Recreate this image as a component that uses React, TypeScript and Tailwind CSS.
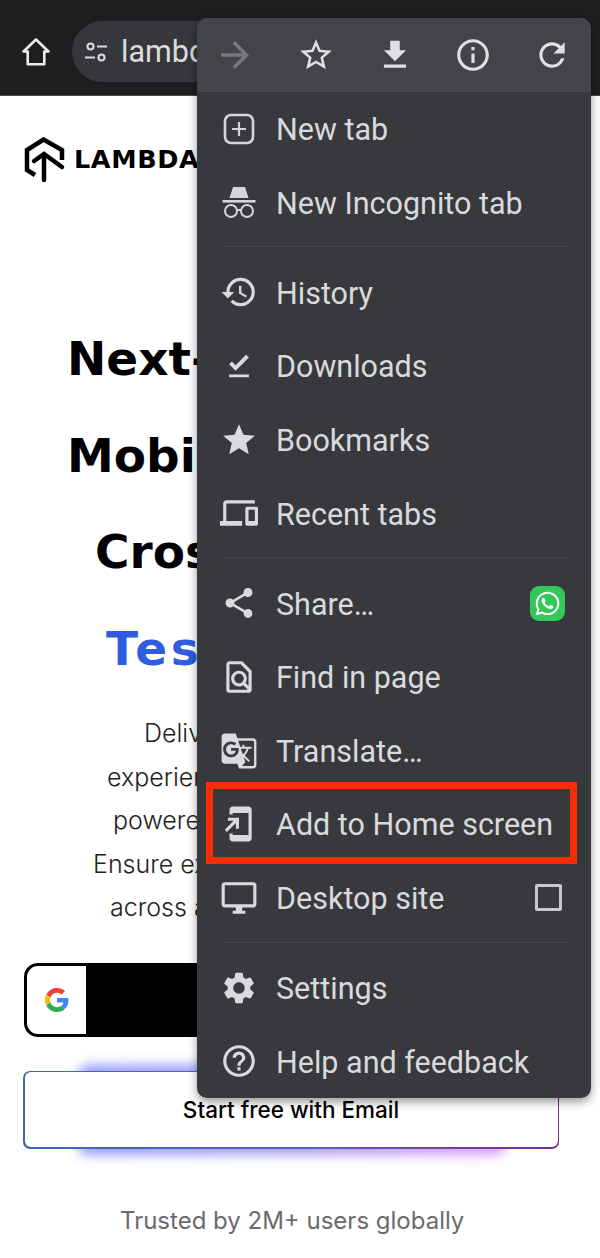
import type { ReactNode } from "react";
import {
  MdAddToHomeScreen,
  MdArrowForward,
  MdDevices,
  MdFileDownload,
  MdFileDownloadDone,
  MdGTranslate,
  MdHelpOutline,
  MdHistory,
  MdInfoOutline,
  MdOutlineDesktopWindows,
  MdOutlineFindInPage,
  MdRefresh,
  MdSettings,
  MdShare,
  MdStar,
  MdStarBorder,
} from "react-icons/md";
import { FaWhatsapp } from "react-icons/fa";

function HomeIcon() {
  return (
    <svg viewBox="0 0 30 30" className="h-[30px] w-[30px]" fill="none" stroke="#ececec" strokeWidth="2.6" strokeLinejoin="round">
      <path d="M15 2.5 2.5 14.5h4.2v12.8h16.6V14.5h4.2z" />
    </svg>
  );
}

function TuneIcon() {
  return (
    <svg viewBox="0 0 24 24" className="h-6 w-6" fill="none" stroke="#dcdcdc" strokeWidth="2">
      <circle cx="6.5" cy="6.5" r="3" />
      <path d="M13 6.5h10M1 17.5h10" />
      <circle cx="17.5" cy="17.5" r="3" />
    </svg>
  );
}

function NewTabIcon() {
  return (
    <svg viewBox="0 0 32 32" className="h-[32px] w-[32px]" fill="none" stroke="#d4d5d8" strokeWidth="2.6">
      <rect x="2" y="2" width="28" height="28" rx="6" />
      <path d="M16 9v14M9 16h14" strokeWidth="2.2" />
    </svg>
  );
}

function IncognitoIcon() {
  return (
    <svg viewBox="0 0 34 34" className="h-[34px] w-[34px]" fill="#d4d5d8">
      <path d="M11 2h12l3.500 11H7.500z" />
      <rect x="0.5" y="15" width="33" height="2.6" />
      <g fill="none" stroke="#d4d5d8" strokeWidth="2">
        <circle cx="9" cy="26" r="6" />
        <circle cx="25" cy="26" r="6" />
        <path d="M15 25h4" />
      </g>
    </svg>
  );
}

function LambdaLogo() {
  return (
    <svg viewBox="0 0 42 46" className="h-[46px] w-[42px]" fill="none" stroke="#000" strokeWidth="4.5" strokeLinejoin="miter">
      <path d="M11 38 3 33V13L19.500 2.500 38 13v10" />
      <path d="M10 24l10-7 18 13" strokeLinecap="round" />
      <path d="M20 18v25" strokeLinecap="round" />
    </svg>
  );
}

function GoogleIcon() {
  return (
    <svg viewBox="0 0 48 48" className="h-[24px] w-[24px]">
      <path fill="#EA4335" d="M24 9.5c3.5 0 6.7 1.2 9.1 3.6l6.8-6.8C35.800 2.500 30.300 0 24 0 14.600 0 6.500 5.400 2.600 13.200l7.900 6.200C12.400 13.600 17.700 9.500 24 9.500z" />
      <path fill="#4285F4" d="M46.900 24.500c0-1.600-.1-3.100-.4-4.500H24v9h12.900c-.6 3-2.300 5.500-4.800 7.200l7.700 6c4.500-4.200 7.100-10.300 7.100-17.700z" />
      <path fill="#FBBC05" d="M10.500 28.600c-.5-1.400-.8-3-.8-4.600s.3-3.200.8-4.600l-7.900-6.200C.9 16.500 0 20.100 0 24s.9 7.500 2.600 10.800z" />
      <path fill="#34A853" d="M24 48c6.500 0 11.900-2.100 15.900-5.800l-7.700-6c-2.200 1.500-4.900 2.300-8.200 2.300-6.300 0-11.600-4.100-13.500-9.900l-7.900 6.200C6.500 42.600 14.600 48 24 48z" />
    </svg>
  );
}

function MenuRow({ icon, label, right, children }: { icon: ReactNode; label: string; right?: ReactNode; children?: ReactNode }) {
  return (
    <div className="relative flex h-[73.6px] items-center pl-[22px] pr-[26px] text-[#d9dadd]">
      <span className="flex w-[40px] shrink-0 items-center justify-center">{icon}</span>
      <span className="ml-[17px] flex-1 pt-[3px] text-[30.5px] leading-none">{label}</span>
      {right}
      {children}
    </div>
  );
}

function Divider() {
  return (
    <div className="flex h-[16.500px] items-start pt-[7px]">
      <div className="mx-[24px] h-px w-full bg-[#46474b]" />
    </div>
  );
}

// only what shows to the left of the open menu
const headingLines = [
  { text: "Next-", cls: "pl-[67px] text-black" },
  { text: "Mobi", cls: "pl-[67px] text-black" },
  { text: "Cros", cls: "pl-[95px] text-black" },
  { text: "Tes", cls: "pl-[106px] tracking-[3.5px] text-[#2f5ce0]" },
];

const paragraphLines = [
  { text: "Deliv", cls: "pl-[144px]" },
  { text: "experien", cls: "pl-[107px]" },
  { text: "powere", cls: "pl-[113px]" },
  { text: "Ensure ex", cls: "pl-[93px]" },
  { text: "across a", cls: "pl-[110px]" },
];

export default function App() {
  return (
    <div className="relative h-[1258px] w-[600px] overflow-hidden bg-white" style={{ fontFamily: "Roboto, sans-serif" }}>
      <header className="flex h-[96px] items-start border-b border-[#4a4b4f] bg-[#1e1e20] pl-[21px] pt-[21px]">
        <div className="mt-[16px]">
          <HomeIcon />
        </div>
        <div className="ml-[21px] flex h-[61px] w-[400px] items-center rounded-l-[31px] bg-[#36373b] pl-[12px]">
          <TuneIcon />
          <span className="ml-[13px] text-[30.5px] text-[#dcdcdc]">lambd</span>
        </div>
      </header>

      <div className="mt-[41px] flex h-[46px] items-center pl-[24px]">
        <LambdaLogo />
        <span className="ml-[8px] text-[25.5px] font-bold leading-none tracking-[0.6px] text-black" style={{ fontFamily: "'DejaVu Sans', sans-serif" }}>
          LAMBDA
        </span>
      </div>

      <h1 className="mt-[128px] whitespace-nowrap text-[47px] font-bold leading-[96.500px]" style={{ fontFamily: "'DejaVu Sans', sans-serif" }}>
        {headingLines.map((l) => (
          <div key={l.text} className={l.cls}>
            {l.text}
          </div>
        ))}
      </h1>

      <div className="mt-[15px] whitespace-nowrap text-[25px] font-light leading-[43.500px] text-[#222]" style={{ fontFamily: "Inter, sans-serif" }}>
        {paragraphLines.map((l) => (
          <div key={l.text} className={l.cls}>
            {l.text}
          </div>
        ))}
      </div>

      <div className="ml-[24px] mt-[33px] flex h-[74px] w-[536px] overflow-hidden rounded-[14px] border-[3px] border-black bg-black">
        <div className="flex w-[59px] items-center justify-center bg-white">
          <GoogleIcon />
        </div>
      </div>

      <div className="relative ml-[23px] mt-[34px] h-[78px] w-[536px]">
        <div className="absolute left-[55px] right-[53px] -inset-y-[6px] rounded-[10px] bg-linear-to-r from-[#6f7cf5] via-[#8a7cf0] to-[#d679ee] opacity-75 blur-[6px]" />
        <div className="relative h-full rounded-[7px] bg-linear-to-r from-[#3f68b8] via-[#5560c0] to-[#7a2a96] p-[1.500px]">
          <div className="flex h-full items-center justify-center rounded-[6px] bg-white pt-[1px] text-[22.500px] font-medium text-black" style={{ fontFamily: "Inter, sans-serif" }}>
            Start free with Email
          </div>
        </div>
      </div>

      <p className="mt-[60px] pl-[120px] text-[24px] leading-none text-[#6a6a6d]" style={{ fontFamily: "Inter, sans-serif" }}>
        Trusted by 2M+ users globally
      </p>

      <div className="absolute left-[197px] top-[18px] w-[394px] overflow-hidden rounded-[10px] bg-[#38393d] shadow-[0_4px_10px_rgba(0,0,0,0.4)]">
        <div className="flex h-[74px] items-center justify-between border-b border-[#47484d] bg-[#43444a] pl-[17px] pr-[20px] text-[#dfe0e2]">
          <MdArrowForward size={42} className="text-[#77787c]" />
          <MdStarBorder size={38} />
          <MdFileDownload size={38} />
          <MdInfoOutline size={38} />
          <MdRefresh size={38} />
        </div>
        <MenuRow icon={<NewTabIcon />} label="New tab" />
        <MenuRow icon={<IncognitoIcon />} label="New Incognito tab" />
        <Divider />
        <MenuRow icon={<MdHistory size={38} />} label="History" />
        <MenuRow icon={<MdFileDownloadDone size={34} />} label="Downloads" />
        <MenuRow icon={<MdStar size={38} />} label="Bookmarks" />
        <MenuRow icon={<MdDevices size={38} />} label="Recent tabs" />
        <Divider />
        <MenuRow
          icon={<MdShare size={36} />}
          label="Share…"
          right={
            <span className="flex h-[35px] w-[35px] items-center justify-center rounded-[9px] bg-[#35c75a] text-white">
              <FaWhatsapp size={27} />
            </span>
          }
        />
        <MenuRow icon={<MdOutlineFindInPage size={38} />} label="Find in page" />
        <MenuRow icon={<MdGTranslate size={38} />} label="Translate…" />
        <MenuRow icon={<MdAddToHomeScreen size={38} />} label="Add to Home screen">
          <div className="absolute bottom-[-3px] left-[9px] right-[14px] top-[-5px] border-[7px] border-[#f92d05]" />
        </MenuRow>
        <MenuRow
          icon={<MdOutlineDesktopWindows size={38} />}
          label="Desktop site"
          right={<span className="mr-[3px] h-[27px] w-[27px] rounded-[2px] border-[3px] border-[#c8c9cc]" />}
        />
        <Divider />
        <MenuRow icon={<MdSettings size={38} />} label="Settings" />
        <MenuRow icon={<MdHelpOutline size={38} />} label="Help and feedback" />
      </div>
    </div>
  );
}
